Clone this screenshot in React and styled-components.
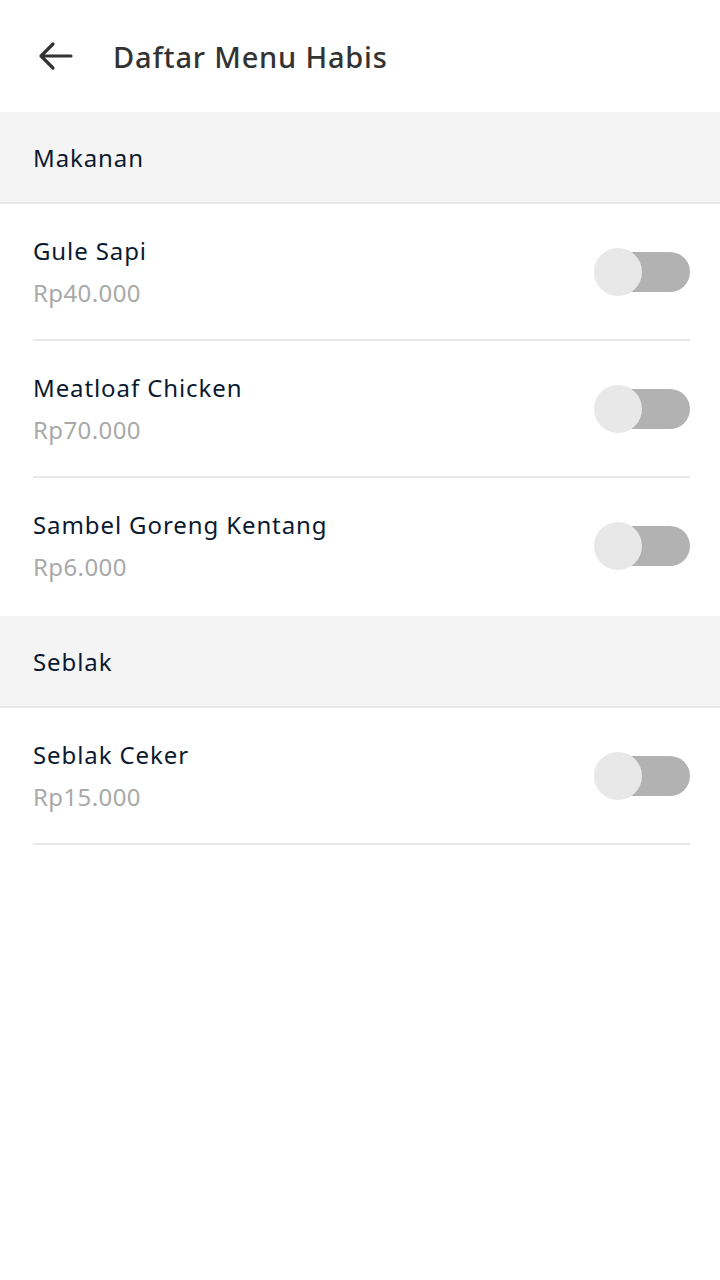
import React, { useState } from "react";
import styled, { createGlobalStyle } from "styled-components";

const GlobalStyle = createGlobalStyle`
  * { box-sizing: border-box; }
  body {
    margin: 0;
    background: #ffffff;
    font-family: "Noto Sans", "Open Sans", sans-serif;
  }
`;

const menu = [
  {
    category: "Makanan",
    items: [
      { id: 1, name: "Gule Sapi", price: "Rp40.000" },
      { id: 2, name: "Meatloaf Chicken", price: "Rp70.000" },
      { id: 3, name: "Sambel Goreng Kentang", price: "Rp6.000" },
    ],
  },
  {
    category: "Seblak",
    items: [{ id: 4, name: "Seblak Ceker", price: "Rp15.000" }],
  },
];

const Page = styled.div`
  width: 720px;
  min-height: 1280px;
  background: #ffffff;
`;

const Header = styled.header`
  height: 112px;
  display: flex;
  align-items: center;
  padding: 0 0 0 38px;
  gap: 39px;
`;

const BackButton = styled.button`
  border: none;
  background: none;
  padding: 0;
  display: flex;
  align-items: center;
  cursor: pointer;
  color: #333333;
`;

const Title = styled.h1`
  margin: 0;
  font-size: 29px;
  font-weight: 500;
  color: #333333;
  letter-spacing: 0.8px;
`;

const Section = styled.section`
  &:not(:last-child) > div:last-child {
    border-bottom-color: transparent;
    height: 138px;
  }
`;

const SectionHeader = styled.div`
  height: 92px;
  display: flex;
  align-items: center;
  padding-left: 33px;
  background: #f4f4f4;
  border-bottom: 2px solid #e6e6e6;
  font-size: 24px;
  letter-spacing: 0.9px;
  color: #0b1a30;
`;

const Row = styled.div`
  display: flex;
  align-items: center;
  justify-content: space-between;
  margin: 0 30px 0 33px;
  height: 137px;
  border-bottom: 2px solid #e8e8e8;
`;

const Info = styled.div`
  display: flex;
  flex-direction: column;
  gap: 8px;
`;

const Name = styled.span`
  font-size: 24px;
  letter-spacing: 0.9px;
  color: #0b1a30;
  line-height: 34px;
`;

const Price = styled.span`
  font-size: 24px;
  letter-spacing: 0.4px;
  color: #a9a9a9;
  line-height: 34px;
`;

const Switch = styled.button`
  position: relative;
  width: 96px;
  height: 48px;
  border: none;
  background: none;
  padding: 0;
  cursor: pointer;

  &::before {
    content: "";
    position: absolute;
    left: 6px;
    right: 0;
    top: 4px;
    height: 40px;
    border-radius: 20px;
    background: ${(p) => (p.$on ? "#9ad0a8" : "#b2b2b2")};
  }

  &::after {
    content: "";
    position: absolute;
    top: 0;
    left: ${(p) => (p.$on ? "48px" : "0")};
    width: 48px;
    height: 48px;
    border-radius: 50%;
    background: ${(p) => (p.$on ? "#2e9e52" : "#e8e8e8")};
  }
`;

const MenuRow = ({ name, price }) => {
  const [on, setOn] = useState(false);
  return (
    <Row>
      <Info>
        <Name>{name}</Name>
        <Price>{price}</Price>
      </Info>
      <Switch $on={on} onClick={() => setOn(!on)} aria-label={name} />
    </Row>
  );
};

export default function App() {
  return (
    <Page>
      <GlobalStyle />
      <Header>
        <BackButton aria-label="back">
          <svg width="36" height="30" viewBox="0 0 36 30" fill="none">
            <path
              d="M33 15H4M15 3L3 15l12 12"
              stroke="currentColor"
              strokeWidth="3.2"
              strokeLinecap="round"
              strokeLinejoin="round"
            />
          </svg>
        </BackButton>
        <Title>Daftar Menu Habis</Title>
      </Header>
      {menu.map((section) => (
        <Section key={section.category}>
          <SectionHeader>{section.category}</SectionHeader>
          {section.items.map((item) => (
            <MenuRow key={item.id} name={item.name} price={item.price} />
          ))}
        </Section>
      ))}
    </Page>
  );
}
